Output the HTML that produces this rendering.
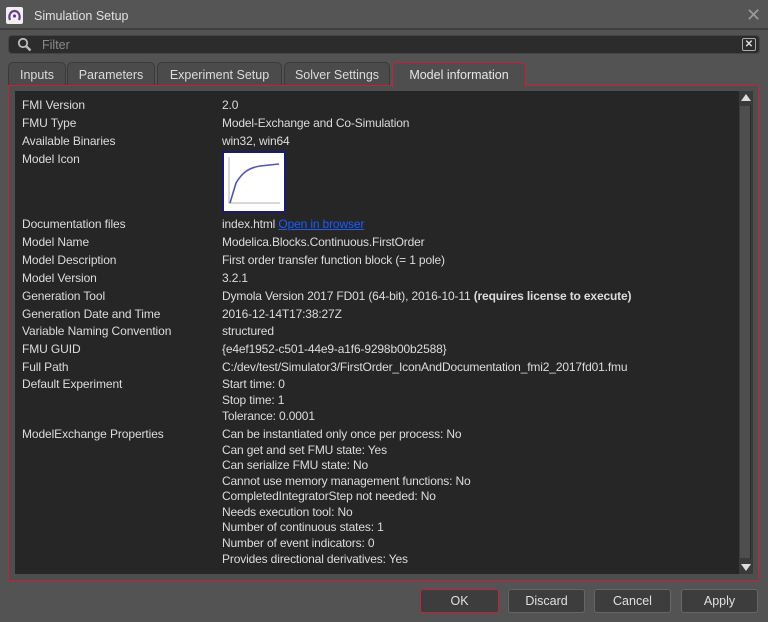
<!DOCTYPE html>
<html><head><meta charset="utf-8"><style>
*{margin:0;padding:0;box-sizing:border-box}
body{width:768px;height:622px;background:#535353;font-family:"Liberation Sans",sans-serif;font-size:12px;color:#dcdcdc;position:relative;overflow:hidden}
.a{position:absolute;white-space:nowrap}
.t{position:absolute;top:62px;height:24px;background:#4b4b4b;border:1px solid #3a3a3a;border-bottom:none;border-radius:5px 5px 0 0;color:#dcdcdc;font-size:12.5px;padding:5px 0 0 0;text-align:center}
.btn{position:absolute;top:589px;height:24px;background:#3d3d3d;border:1px solid #666;border-radius:3px;text-align:center;line-height:22px;font-size:12.5px;color:#e0e0e0}
.l{position:absolute;left:22px;white-space:nowrap;letter-spacing:-0.1px}
.v{position:absolute;left:222px;white-space:nowrap;letter-spacing:-0.15px}
</style></head><body>
<div class="a" style="left:0;top:0;width:768px;height:30px;background:#555;border-bottom:2px solid #3e3e3e"></div>
<div class="a" style="left:6px;top:7px;width:17px;height:17px;background:#f0f0f0;border-radius:2px"></div>
<svg class="a" style="left:7px;top:8px" width="15" height="15" viewBox="0 0 15 15"><path d="M3 12 C1 7 4 3 7.5 3 C11 3 14 7 12 12" stroke="#6a3d8a" stroke-width="2.2" fill="none"/><circle cx="7.5" cy="8" r="1.6" fill="#6a3d8a"/></svg>
<div class="a" style="left:34px;top:9px;font-size:12.5px;color:#e0e0e0">Simulation Setup</div>
<div class="a" style="left:746px;top:5px;font-size:18px;color:#9a9a9a">✕</div>
<div class="a" style="left:8px;top:35px;width:752px;height:19px;background:#2c2c2c;border:1px solid #444;border-radius:4px"></div>
<svg class="a" style="left:17px;top:37px" width="16" height="16" viewBox="0 0 16 16"><circle cx="6" cy="6" r="4.2" stroke="#bbb" stroke-width="1.8" fill="none"/><path d="M9 9 L13.5 13.5" stroke="#bbb" stroke-width="2.4"/></svg>
<div class="a" style="left:42px;top:38px;color:#8a8a8a;font-size:12.5px">Filter</div>
<div class="a" style="left:742px;top:38px;width:14px;height:13px;border:1px solid #aaa;border-radius:2px;color:#ddd;font-size:10px;line-height:11px;text-align:center;font-weight:bold">✕</div>
<div class="t" style="left:8px;width:58px">Inputs</div>
<div class="t" style="left:67px;width:88px">Parameters</div>
<div class="t" style="left:157px;width:125px">Experiment Setup</div>
<div class="t" style="left:284px;width:106px">Solver Settings</div>
<div class="a" style="left:8px;top:85px;width:751px;height:496px;border:1px solid #c8203a;background:#4e4e4e"></div>
<div class="t" style="left:392px;width:134px;border:1px solid #c8203a;border-bottom:none;height:25px;background:#4e4e4e;color:#e6e6e6">Model information</div>
<div class="a" style="left:15px;top:91px;width:724px;height:483px;background:#262626"></div>
<div class="a" style="left:739px;top:91px;width:14px;height:483px;background:#3a3a3a"></div>
<div class="a" style="left:740px;top:106px;width:11px;height:452px;background:#4e4e4e;border-right:1px solid #2a2a2a"></div>
<div class="a" style="left:741px;top:94px;width:0;height:0;border-left:5px solid transparent;border-right:5px solid transparent;border-bottom:7px solid #ddd"></div>
<div class="a" style="left:741px;top:564px;width:0;height:0;border-left:5px solid transparent;border-right:5px solid transparent;border-top:7px solid #ddd"></div>

<div class="l" style="top:98px">FMI Version</div><div class="v" style="top:98px">2.0</div>
<div class="l" style="top:116px">FMU Type</div><div class="v" style="top:116px">Model-Exchange and Co-Simulation</div>
<div class="l" style="top:134px">Available Binaries</div><div class="v" style="top:134px">win32, win64</div>
<div class="l" style="top:152px">Model Icon</div>
<div class="a" style="left:222px;top:151px;width:64px;height:62px;background:#fff;border:2px solid #1a1a70"></div>
<svg class="a" style="left:224px;top:153px" width="60" height="58" viewBox="0 0 60 58"><path d="M5 4 V50 H56" stroke="#ccc" stroke-width="1.5" fill="none"/><path d="M6 50 L12 30 C18 20 24 15 36 13 L55 11" stroke="#5555aa" stroke-width="1.6" fill="none"/></svg>
<div class="l" style="top:217px">Documentation files</div><div class="v" style="top:217px">index.html <span style="color:#1a5cff;text-decoration:underline">Open in browser</span></div>
<div class="l" style="top:235px">Model Name</div><div class="v" style="top:235px">Modelica.Blocks.Continuous.FirstOrder</div>
<div class="l" style="top:253px">Model Description</div><div class="v" style="top:253px">First order transfer function block (= 1 pole)</div>
<div class="l" style="top:271px">Model Version</div><div class="v" style="top:271px">3.2.1</div>
<div class="l" style="top:289px">Generation Tool</div><div class="v" style="top:289px">Dymola Version 2017 FD01 (64-bit), 2016-10-11 <b>(requires license to execute)</b></div>
<div class="l" style="top:307px">Generation Date and Time</div><div class="v" style="top:307px">2016-12-14T17:38:27Z</div>
<div class="l" style="top:324px">Variable Naming Convention</div><div class="v" style="top:324px">structured</div>
<div class="l" style="top:342px">FMU GUID</div><div class="v" style="top:342px">{e4ef1952-c501-44e9-a1f6-9298b00b2588}</div>
<div class="l" style="top:360px">Full Path</div><div class="v" style="top:360px">C:/dev/test/Simulator3/FirstOrder_IconAndDocumentation_fmi2_2017fd01.fmu</div>
<div class="l" style="top:377px">Default Experiment</div><div class="v" style="top:377px">Start time: 0</div>
<div class="v" style="top:393px">Stop time: 1</div>
<div class="v" style="top:409px">Tolerance: 0.0001</div>
<div class="l" style="top:427px">ModelExchange Properties</div><div class="v" style="top:427px">Can be instantiated only once per process: No</div>
<div class="v" style="top:443px">Can get and set FMU state: Yes</div>
<div class="v" style="top:458px">Can serialize FMU state: No</div>
<div class="v" style="top:474px">Cannot use memory management functions: No</div>
<div class="v" style="top:489px">CompletedIntegratorStep not needed: No</div>
<div class="v" style="top:505px">Needs execution tool: No</div>
<div class="v" style="top:520px">Number of continuous states: 1</div>
<div class="v" style="top:536px">Number of event indicators: 0</div>
<div class="v" style="top:552px">Provides directional derivatives: Yes</div>

<div class="btn" style="left:420px;width:79px;border-color:#c8203a">OK</div>
<div class="btn" style="left:508px;width:77px">Discard</div>
<div class="btn" style="left:594px;width:77px">Cancel</div>
<div class="btn" style="left:681px;width:77px">Apply</div>
</body></html>
